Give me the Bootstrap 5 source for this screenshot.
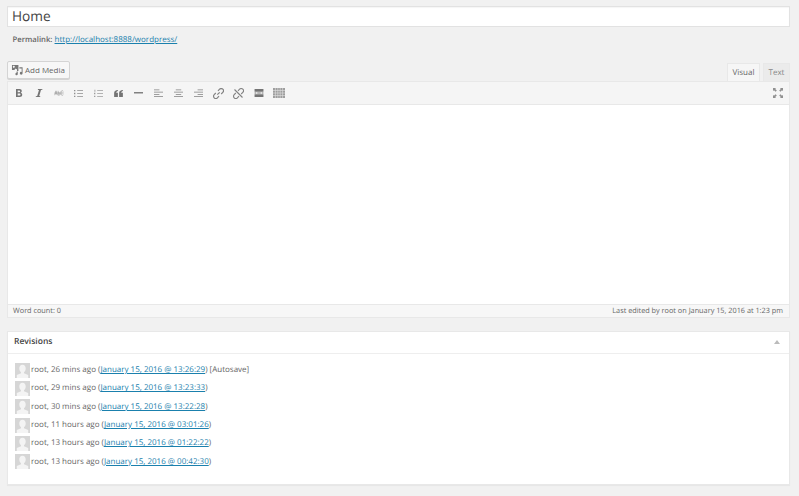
<!DOCTYPE html>
<html lang="en"><head><meta charset="utf-8"><title>Edit Page</title>
<link href="https://cdn.jsdelivr.net/npm/bootstrap@5.3.0/dist/css/bootstrap.min.css" rel="stylesheet">
<style>
html,body{height:496px;overflow:hidden}
body{background:#f1f1f1;font-family:"Open Sans","Noto Sans",sans-serif;font-size:8px;line-height:12px;color:#555;padding:6px 9px 0 7px;text-rendering:geometricPrecision}
a{color:#1a80ad}
.title-box{height:21px;background:#fff;border:1px solid #e2e2e2;font-size:13.7px;line-height:20px;padding-left:4px;color:#444;box-shadow:inset 0 1px 1px rgba(0,0,0,.04)}
.perma{height:12px;margin-top:7px;padding-left:5.500px;color:#555}
.perma b{font-weight:600;color:#666;font-size:7.700px}
.media-row{margin-top:15px;height:20px}
.media-btn{height:18px;width:63px;border:1px solid #d4d4d4;border-radius:2px;background:#f7f7f7;box-shadow:0 1px 0 #d4d4d4;color:#666;font-size:8px;display:flex;align-items:center;gap:1px;padding:0 0 0 3px;white-space:nowrap}
.tabs-w{gap:3px;align-self:flex-end}
.wtab{height:18px;border:1px solid #e8e8e8;border-bottom:0;background:#ebebeb;text-align:center;line-height:17px}
.wtab.on{background:#f6f6f6;color:#666;width:33px}
.wtab.off{width:27px;color:#888}
.bar{height:24px;background:#f5f5f5;border:1px solid #e8e8e8;padding:0 1px 0 .5px;color:#555}
.ic{width:20px;height:22px;display:flex;align-items:center;justify-content:center;flex:none;opacity:.8}
.ic svg{display:block}
.area{height:199px;background:#fff;border-left:1px solid #e8e8e8;border-right:1px solid #e8e8e8}
.foot{height:14px;background:#f7f7f7;border:1px solid #e8e8e8;padding:0 6px 0 5px;line-height:13px;color:#666;font-size:7.300px}
.rev{margin-top:13px;height:154px;background:#fff;border:1px solid #e8e8e8;box-shadow:0 1px 1px rgba(0,0,0,.04)}
.rev-h{height:22px;border-bottom:1px solid #eee;padding:0 9px 2px 6px;font-weight:600;font-size:8.500px;color:#444}
.rev-l{list-style:none;margin:0;padding:7px 0 0 7px;color:#666}
.rev-l li{height:18.3px;display:flex;align-items:center;gap:1px;font-size:8px}
.rev-l svg{display:block;flex:none}
</style></head><body>
<div class="title-box">Home</div>
<div class="perma"><b>Permalink:</b> <a href="#">http://localhost:8888/wordpress/</a></div>
<div class="media-row d-flex justify-content-between">
  <button class="media-btn" type="button"><svg width="13" height="12" viewBox="0 0 14 13"><path fill="#777" d="M1 1h7v6.500H6.500V6L5 4.800 3.500 6.500H1zM3 2a1 1 0 1 0 .01 0z"/><path fill="#777" d="M9 3.500h3.500V10a1.500 1.500 0 1 1-1-1.400V5H9zM6 9.500V8h1.300v3a1.300 1.300 0 1 1-1.300-1.500z"/></svg>Add Media</button>
  <div class="tabs-w d-flex"><div class="wtab on">Visual</div><div class="wtab off">Text</div></div>
</div>
<div class="bar d-flex align-items-center justify-content-between">
  <div class="d-flex align-items-center">
    <span class="ic"><svg width="10" height="10" viewBox="0 0 10 10"><path fill="#555" d="M2 1h3.600c1.400 0 2.200.8 2.200 2.100 0 .8-.4 1.400-1.100 1.700 1 .3 1.500 1 1.500 2 0 1.500-1 2.200-2.500 2.200H2zm1.700 1.400v1.800h1.500c.6 0 1-.3 1-.9s-.4-.9-1-.9zm0 3.100v2.100h1.700c.7 0 1.100-.4 1.100-1s-.4-1.100-1.100-1.100z"/></svg></span>
    <span class="ic"><svg width="10" height="10" viewBox="0 0 10 10"><path fill="#555" d="M4 1h4.500l-.2.8-1.300.3L5.200 8l1.100.2-.1.8H1.700l.2-.8 1.300-.3L5 2.100 3.800 1.900z"/></svg></span>
    <span class="ic"><svg width="10" height="6" viewBox="0 0 11 7"><path stroke="#888" stroke-width=".8" fill="none" d="M.5 6 2 1l1.500 5M1 4.300h2M4.500 1v5h1a1.300 1.300 0 0 0 0-2.600h-1M10.500 1.500a1.500 1.500 0 0 0-2.500 2 1.500 1.500 0 0 0 2.500 2M0 3.500h11"/></svg></span>
    <span class="ic"><svg width="9" height="9" viewBox="0 0 10 10"><path fill="#777" d="M0 1h1.500v1.500H0zM3.500 1.300H10v.8H3.500zM0 4.200h1.500v1.500H0zM3.500 4.500H10v.8H3.500zM0 7.400h1.500V9H0zM3.500 7.700H10v.8H3.500z"/></svg></span>
    <span class="ic"><svg width="9" height="9" viewBox="0 0 10 10"><path fill="#888" d="M.5.800h1v2.200h-1zM0 4.200h1.500v1.500H0zM0 7.400h1.500V9H0zM3.500 1.300H10v.8H3.500zM3.500 4.500H10v.8H3.500zM3.500 7.700H10v.8H3.500z"/></svg></span>
    <span class="ic"><svg width="9" height="7" viewBox="0 0 10 8"><path fill="#555" d="M4.300 0v1.200C3 1.500 2.500 2.200 2.400 3.200h1.900V8H0V3.500C0 1.400 1.500.2 4.300 0zM10 0v1.200C8.700 1.500 8.200 2.200 8.100 3.200H10V8H5.700V3.500C5.700 1.400 7.200.2 10 0z"/></svg></span>
    <span class="ic"><svg width="9" height="2" viewBox="0 0 10 2"><path fill="#555" d="M0 0h10v1.500H0z"/></svg></span>
    <span class="ic"><svg width="9" height="9" viewBox="0 0 10 10"><path fill="#666" d="M0 .5h6v1H0zM0 3h10v1H0zM0 5.500h6v1H0zM0 8h10v1H0z"/></svg></span>
    <span class="ic"><svg width="9" height="9" viewBox="0 0 10 10"><path fill="#666" d="M2 .5h6v1H2zM0 3h10v1H0zM2 5.500h6v1H2zM0 8h10v1H0z"/></svg></span>
    <span class="ic"><svg width="9" height="9" viewBox="0 0 10 10"><path fill="#666" d="M4 .5h6v1H4zM0 3h10v1H0zM4 5.500h6v1H4zM0 8h10v1H0z"/></svg></span>
    <span class="ic"><svg width="11" height="11" viewBox="0 0 11 11"><path fill="none" stroke="#666" stroke-width="1.200" d="M4.300 6.700 6.700 4.300M5 2.800 6.600 1.200a2 2 0 0 1 3.200 3.200L8.200 6M6 8.200 4.400 9.800A2 2 0 0 1 1.200 6.600L2.800 5"/></svg></span>
    <span class="ic"><svg width="11" height="11" viewBox="0 0 11 11"><path fill="none" stroke="#666" stroke-width="1.100" d="M5 2.800 6.600 1.200a2 2 0 0 1 3.200 3.200L8.200 6M6 8.200 4.400 9.800A2 2 0 0 1 1.200 6.600L2.800 5M1.500 1.500l8 8"/></svg></span>
    <span class="ic"><svg width="10" height="8" viewBox="0 0 10 9"><path fill="#555" d="M0 0h10v3H0zM0 6h10v3H0zM0 4h2v1H0zM3 4h4v1H3zM8 4h2v1H8z"/></svg></span>
    <span class="ic"><svg width="12" height="10" viewBox="0 0 12 10"><path fill="#888" d="M0 0h12v10H0z"/><path stroke="#ddd" stroke-width=".6" d="M0 2.500h12M0 5h12M0 7.500h12M2.400 0v10M4.800 0v10M7.200 0v10M9.600 0v10"/></svg></span>
  </div>
  <span class="ic"><svg width="10" height="10" viewBox="0 0 10 10"><path fill="#777" d="M0 0h3L2.200 1l1.600 1.600-1.200 1.200L1 2.200 0 3zM10 0v3L9 2.200 7.400 3.800 6.200 2.600 7.800 1 7 0zM0 10V7l1 .8 1.600-1.600 1.200 1.200L2.200 9l.8 1zM10 10H7l.8-1-1.600-1.600 1.200-1.200L9 7.800 10 7z"/></svg></span>
</div>
<div class="area"></div>
<div class="foot d-flex justify-content-between"><span>Word count: 0</span><span>Last edited by root on January 15, 2016 at 1:23 pm</span></div>
<section class="rev">
  <div class="rev-h d-flex align-items-center justify-content-between"><span>Revisions</span><svg width="6" height="4" viewBox="0 0 6 4"><path fill="#bbb" d="M3 0l3 4H0z"/></svg></div>
  <ul class="rev-l">
    <li><svg width="15" height="15" viewBox="0 0 15 15"><rect width="15" height="15" fill="#d6d6d6"/><path fill="#f4f4f4" d="M7.500 1.800c-2 0-3.200 1.500-3.200 3.600 0 1.700.7 3 1.700 3.800v1.100L1.800 12v3h11.400v-3L9 10.300V9.200c1-.8 1.700-2.100 1.700-3.800 0-2.100-1.200-3.600-3.200-3.600z"/></svg><span>root, 26 mins ago (<a href="#">January 15, 2016 @ 13:26:29</a>) [Autosave]</span></li>
    <li><svg width="15" height="15" viewBox="0 0 15 15"><rect width="15" height="15" fill="#d6d6d6"/><path fill="#f4f4f4" d="M7.500 1.800c-2 0-3.200 1.500-3.200 3.600 0 1.700.7 3 1.700 3.800v1.100L1.800 12v3h11.400v-3L9 10.300V9.200c1-.8 1.700-2.100 1.700-3.800 0-2.100-1.200-3.600-3.200-3.600z"/></svg><span>root, 29 mins ago (<a href="#">January 15, 2016 @ 13:23:33</a>)</span></li>
    <li><svg width="15" height="15" viewBox="0 0 15 15"><rect width="15" height="15" fill="#d6d6d6"/><path fill="#f4f4f4" d="M7.500 1.800c-2 0-3.200 1.500-3.200 3.600 0 1.700.7 3 1.700 3.800v1.100L1.800 12v3h11.400v-3L9 10.300V9.200c1-.8 1.700-2.100 1.700-3.800 0-2.100-1.200-3.600-3.200-3.600z"/></svg><span>root, 30 mins ago (<a href="#">January 15, 2016 @ 13:22:28</a>)</span></li>
    <li><svg width="15" height="15" viewBox="0 0 15 15"><rect width="15" height="15" fill="#d6d6d6"/><path fill="#f4f4f4" d="M7.500 1.800c-2 0-3.200 1.500-3.200 3.600 0 1.700.7 3 1.700 3.800v1.100L1.800 12v3h11.400v-3L9 10.300V9.200c1-.8 1.700-2.100 1.700-3.800 0-2.100-1.200-3.600-3.200-3.600z"/></svg><span>root, 11 hours ago (<a href="#">January 15, 2016 @ 03:01:26</a>)</span></li>
    <li><svg width="15" height="15" viewBox="0 0 15 15"><rect width="15" height="15" fill="#d6d6d6"/><path fill="#f4f4f4" d="M7.500 1.800c-2 0-3.200 1.500-3.200 3.600 0 1.700.7 3 1.700 3.800v1.100L1.800 12v3h11.400v-3L9 10.300V9.200c1-.8 1.700-2.100 1.700-3.800 0-2.100-1.200-3.600-3.200-3.600z"/></svg><span>root, 13 hours ago (<a href="#">January 15, 2016 @ 01:22:22</a>)</span></li>
    <li><svg width="15" height="15" viewBox="0 0 15 15"><rect width="15" height="15" fill="#d6d6d6"/><path fill="#f4f4f4" d="M7.500 1.800c-2 0-3.200 1.500-3.200 3.600 0 1.700.7 3 1.700 3.800v1.100L1.800 12v3h11.400v-3L9 10.300V9.200c1-.8 1.700-2.100 1.700-3.800 0-2.100-1.200-3.600-3.200-3.600z"/></svg><span>root, 13 hours ago (<a href="#">January 15, 2016 @ 00:42:30</a>)</span></li>
  </ul>
</section>
</body></html>
